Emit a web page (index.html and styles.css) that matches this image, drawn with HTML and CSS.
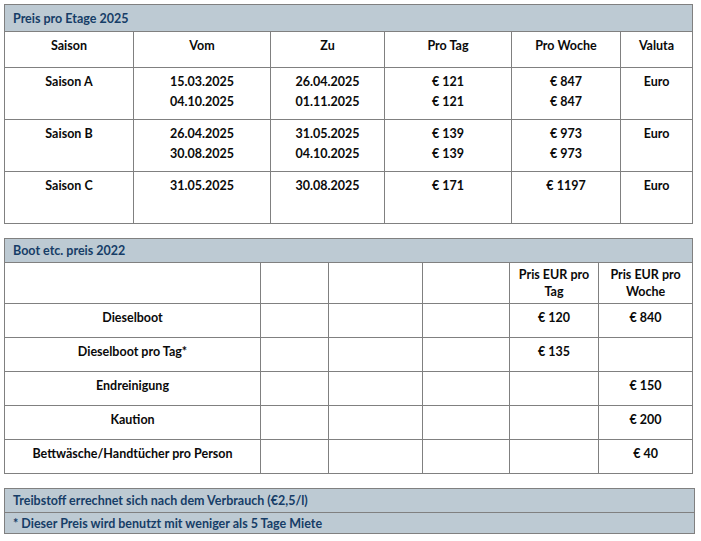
FILE: index.html
```html
<!DOCTYPE html>
<html lang="de">
<head>
<meta charset="utf-8">
<link rel="stylesheet" href="styles.css">
</head>
<body>
<table class="tbl t1">
  <colgroup>
    <col class="c1"><col class="c2"><col class="c3"><col class="c4"><col class="c5"><col class="c6">
  </colgroup>
  <tr class="band"><td colspan="6">Preis pro Etage 2025</td></tr>
  <tr class="head"><td>Saison</td><td>Vom</td><td>Zu</td><td>Pro Tag</td><td>Pro Woche</td><td>Valuta</td></tr>
  <tr class="row"><td>Saison A</td><td>15.03.2025<br>04.10.2025</td><td>26.04.2025<br>01.11.2025</td><td>€ 121<br>€ 121</td><td>€ 847<br>€ 847</td><td>Euro</td></tr>
  <tr class="row"><td>Saison B</td><td>26.04.2025<br>30.08.2025</td><td>31.05.2025<br>04.10.2025</td><td>€ 139<br>€ 139</td><td>€ 973<br>€ 973</td><td>Euro</td></tr>
  <tr class="row"><td>Saison C</td><td>31.05.2025</td><td>30.08.2025</td><td>€ 171</td><td>€ 1197</td><td>Euro</td></tr>
</table>

<table class="tbl t2">
  <colgroup>
    <col class="d1"><col class="d2"><col class="d3"><col class="d4"><col class="d5"><col class="d6">
  </colgroup>
  <tr class="band"><td colspan="6">Boot etc. preis 2022</td></tr>
  <tr class="head2"><td></td><td></td><td></td><td></td><td>Pris EUR pro<br>Tag</td><td>Pris EUR pro<br>Woche</td></tr>
  <tr class="row2"><td>Dieselboot</td><td></td><td></td><td></td><td>€ 120</td><td>€ 840</td></tr>
  <tr class="row2"><td>Dieselboot pro Tag*</td><td></td><td></td><td></td><td>€ 135</td><td></td></tr>
  <tr class="row2"><td>Endreinigung</td><td></td><td></td><td></td><td></td><td>€ 150</td></tr>
  <tr class="row2"><td>Kaution</td><td></td><td></td><td></td><td></td><td>€ 200</td></tr>
  <tr class="row2"><td>Bettwäsche/Handtücher pro Person</td><td></td><td></td><td></td><td></td><td>€ 40</td></tr>
</table>

<div class="notes">
  <div class="note n1">Treibstoff errechnet sich nach dem Verbrauch (€2,5/l)</div>
  <div class="note n2">* Dieser Preis wird benutzt mit weniger als 5 Tage Miete</div>
</div>
</body>
</html>
```
FILE: styles.css
```css
html, body {
  background: #ffffff;
}
body {
  margin: 4px;
  font-family: Lato, "Liberation Sans", sans-serif;
  font-weight: 700;
  font-size: 12.5px;
  color: #0a0a0a;
}
.tbl {
  border-collapse: collapse;
  table-layout: fixed;
  width: 689px;
}
.tbl td {
  border: 1px solid #808080;
  padding: 0;
  text-align: center;
  vertical-align: top;
}
.t1 { margin-bottom: 14px; }
.t2 { margin-bottom: 14px; }
.c1 { width: 129px; }
.c2 { width: 137px; }
.c3 { width: 114px; }
.c4 { width: 127px; }
.c5 { width: 109px; }
.c6 { width: 72px; }
.d1 { width: 256px; }
.d2 { width: 68px; }
.d3 { width: 94px; }
.d4 { width: 87px; }
.d5 { width: 89px; }
.d6 { width: 94px; }

.band td {
  background: #bdcad3;
  color: #163d67;
  text-align: left;
  padding-left: 8px;
  vertical-align: middle;
}
.t1 .band td { height: 26px; }
.t2 .band td { height: 23px; }

.head td {
  height: 36px;
  line-height: 20px;
  padding-top: 4px;
  box-sizing: border-box;
}
.row td {
  height: 52px;
  line-height: 20px;
  padding-top: 4px;
  box-sizing: border-box;
}
.head2 td {
  height: 41px;
  line-height: 17px;
  padding-top: 3px;
  box-sizing: border-box;
}
.row2 td {
  height: 34px;
  line-height: 17px;
  padding-top: 5px;
  box-sizing: border-box;
}

.notes {
  width: 689px;
  border: 1px solid #808080;
  background: #bdcad3;
  color: #163d67;
}
.note {
  padding-left: 8px;
  display: flex;
  align-items: center;
}
.n1 {
  height: 23px;
  border-bottom: 1px solid #808080;
}
.n2 {
  height: 20px;
}
```
